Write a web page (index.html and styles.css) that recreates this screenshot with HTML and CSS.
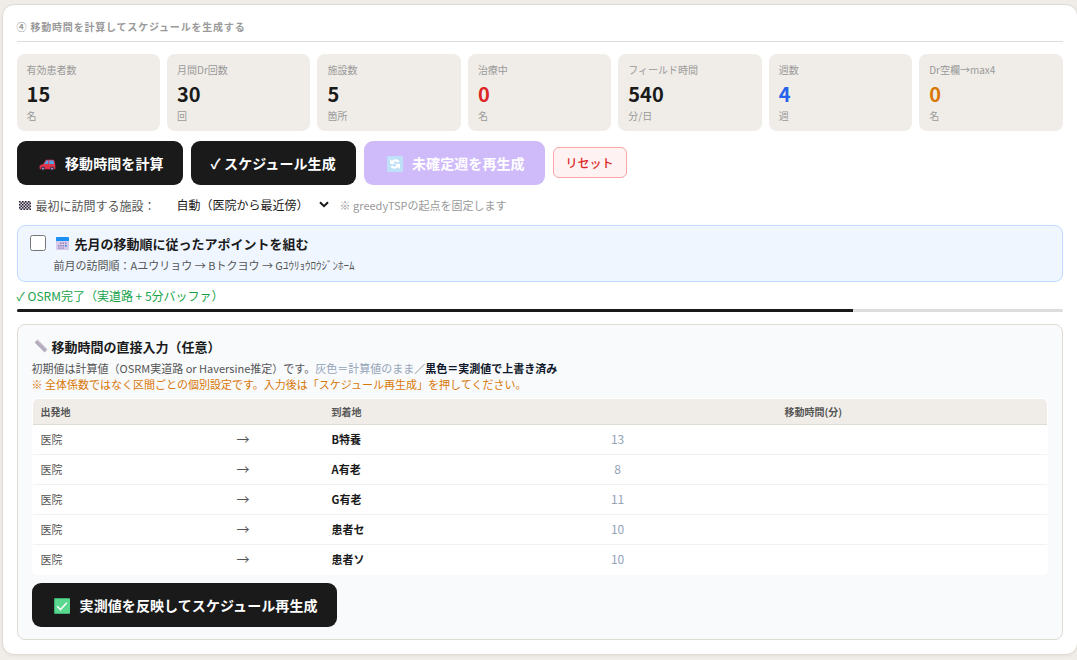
FILE: index.html
```html
<!DOCTYPE html>
<html lang="ja">
<head>
<meta charset="utf-8">
<title>スケジュール生成</title>
<link rel="stylesheet" href="styles.css">
</head>
<body>
<main class="card">
  <h2 class="card-title">④ 移動時間を計算してスケジュールを生成する</h2>

  <section class="stats">
    <div class="stat"><div class="stat-label">有効患者数</div><div class="stat-value">15</div><div class="stat-unit">名</div></div>
    <div class="stat"><div class="stat-label">月間Dr回数</div><div class="stat-value">30</div><div class="stat-unit">回</div></div>
    <div class="stat"><div class="stat-label">施設数</div><div class="stat-value">5</div><div class="stat-unit">箇所</div></div>
    <div class="stat"><div class="stat-label">治療中</div><div class="stat-value red">0</div><div class="stat-unit">名</div></div>
    <div class="stat"><div class="stat-label">フィールド時間</div><div class="stat-value">540</div><div class="stat-unit">分/日</div></div>
    <div class="stat"><div class="stat-label">週数</div><div class="stat-value blue">4</div><div class="stat-unit">週</div></div>
    <div class="stat"><div class="stat-label">Dr空欄→max4</div><div class="stat-value amber">0</div><div class="stat-unit">名</div></div>
  </section>

  <div class="actions">
    <button class="btn btn-calc">
      <svg class="icon-car" viewBox="0 0 17 12" width="17" height="12">
        <path d="M1 6.200 4.200 5 6.400 1.400Q6.800.8 7.600.8H14q1.200 0 1.500 1.200L16.300 6v3.400q0 .8-.8.8H1.600Q.6 10.200.6 9.200V7z" fill="#e0344c"/>
        <path d="M5.200 5 7 2q.2-.4.7-.4H9.300V5zM10.300 1.600H13.600q.7 0 .9.700L15 5H10.300z" fill="#4aa5e8"/>
        <circle cx="4" cy="9.600" r="2" fill="#3d3550"/><circle cx="4" cy="9.600" r=".9" fill="#b9a9d0"/>
        <circle cx="13" cy="9.600" r="2" fill="#3d3550"/><circle cx="13" cy="9.600" r=".9" fill="#b9a9d0"/>
      </svg>
      <span>移動時間を計算</span>
    </button>
    <button class="btn btn-gen">✓ スケジュール生成</button>
    <button class="btn btn-regen">
      <svg class="icon-cycle" viewBox="0 0 16 16" width="16" height="16">
        <rect width="16" height="16" rx="1" fill="#bfe0f9"/>
        <path d="M3 3v5h5L6.300 6.300Q8.500 4.500 10.500 6.500L12.800 5.600Q9.500 1.500 4.700 4.700zM13 13V8H8l1.700 1.700Q7.500 11.500 5.500 9.500L3.200 10.400Q6.500 14.500 11.300 11.300z" fill="#fff"/>
      </svg>
      <span>未確定週を再生成</span>
    </button>
    <button class="btn-reset">リセット</button>
  </div>

  <div class="start-row">
    <svg class="icon-flag" viewBox="0 0 12 9" width="12" height="9">
      <rect width="12" height="9" fill="#d9d4de"/>
      <path d="M0 0h1.500v1.500H0zM3 0h1.500v1.500H3zM6 0h1.500v1.500H6zM9 0h1.500v1.500H9zM1.500 1.500H3V3H1.500zM4.500 1.500H6V3H4.500zM7.500 1.500H9V3H7.500zM10.500 1.500H12V3h-1.500zM0 3h1.500v1.500H0zM3 3h1.500v1.500H3zM6 3h1.500v1.500H6zM9 3h1.500v1.500H9zM1.500 4.500H3V6H1.500zM4.500 4.500H6V6H4.500zM7.500 4.500H9V6H7.500zM10.500 4.500H12V6h-1.500zM0 6h1.500v1.500H0zM3 6h1.500v1.500H3zM6 6h1.500v1.500H6zM9 6h1.500v1.500H9zM1.500 7.500H3V9H1.500zM4.500 7.500H6V9H4.500zM7.500 7.500H9V9H7.500zM10.500 7.500H12V9h-1.500z" fill="#2c2335"/>
    </svg>
    <span class="start-label">最初に訪問する施設：</span>
    <span class="select">自動（医院から最近傍）
      <svg viewBox="0 0 10 7" width="10" height="7"><path d="m1 1.200 4 4 4-4" fill="none" stroke="#1a1a1a" stroke-width="2"/></svg>
    </span>
    <span class="start-note">※ greedyTSPの起点を固定します</span>
  </div>

  <label class="option">
    <input class="option-check" type="checkbox">
    <span class="option-body">
      <span class="option-title">
        <svg viewBox="0 0 13 13" width="13" height="13">
          <rect width="13" height="13" rx="1" fill="#d6caea"/>
          <path d="M0 4V1q0-1 1-1h11q1 0 1 1v3z" fill="#1b8ff2"/>
          <path d="M4 5.500h1.500V7H4zM6.500 5.500H8V7H6.500zM9 5.500h1.500V7H9zM2 8h1.500v1.400H2zM4.300 8h1.500v1.400H4.300zM6.600 8h1.500v1.400H6.600zM2 10.400h1.500v1.400H2zM4.300 10.400h1.500v1.400H4.300zM6.600 10.400h1.500v1.400H6.600z" fill="#9482b8"/>
          <path d="M9 8h1.700v1.500H9z" fill="#2a7fe0"/>
        </svg>
        <span>先月の移動順に従ったアポイントを組む</span>
      </span>
      <span class="option-sub">前月の訪問順：Aユウリョウ → Bトクヨウ → Gﾕｳﾘｮｳﾛｳｼﾞﾝﾎｰﾑ</span>
    </span>
  </label>

  <div class="status">✓ OSRM完了（実道路 + 5分バッファ）</div>
  <div class="progress"><div class="progress-fill" style="width:80%"></div></div>

  <section class="panel">
    <h3 class="panel-title">
      <svg viewBox="0 0 14 14" width="14" height="14">
        <path d="M3.600.6 13.400 10.400 10.600 13.400.6 3.600z" fill="#b4acbc"/>
        <path d="M3.600.6 13.400 10.400 12.800 11 3 1.200z" fill="#d2cbd8"/>
      </svg>
      <span>移動時間の直接入力（任意）</span>
    </h3>
    <p class="hint">初期値は計算値（OSRM実道路 or Haversine推定）です。<span class="hint-muted">灰色＝計算値のまま</span>／<b class="hint-strong">黒色＝実測値で上書き済み</b></p>
    <p class="hint hint-warn">※ 全体係数ではなく区間ごとの個別設定です。入力後は「スケジュール再生成」を押してください。</p>
    <div class="table">
      <div class="row row-head"><span>出発地</span><span class="head-dest">到着地</span><span class="head-time">移動時間(分)</span></div>
      <div class="row"><span>医院</span><span class="arrow">→</span><b>B特養</b><span class="minutes">13</span></div>
      <div class="row"><span>医院</span><span class="arrow">→</span><b>A有老</b><span class="minutes">8</span></div>
      <div class="row"><span>医院</span><span class="arrow">→</span><b>G有老</b><span class="minutes">11</span></div>
      <div class="row"><span>医院</span><span class="arrow">→</span><b>患者セ</b><span class="minutes">10</span></div>
      <div class="row"><span>医院</span><span class="arrow">→</span><b>患者ソ</b><span class="minutes">10</span></div>
    </div>
    <button class="btn btn-apply">
      <svg class="icon-done" viewBox="0 0 16 16" width="16" height="16">
        <rect width="16" height="16" rx="1" fill="#3fae75"/>
        <rect x="1" y="1" width="15" height="14" rx="1" fill="#5ad890"/>
        <path d="m3.200 8.300 3.300 3.400 6.300-6.900" fill="none" stroke="#fff" stroke-width="1.600"/>
      </svg>
      <span>実測値を反映してスケジュール再生成</span>
    </button>
  </section>
</main>
</body>
</html>
```
FILE: styles.css
```css
* { box-sizing: border-box; }

body {
  margin: 0;
  height: 660px;
  padding: 4px 0 0 1.6px;
  overflow: hidden;
  background: #f0ede8;
  color: #1a1a1a;
  font-family: "Noto Sans CJK JP", sans-serif;
  font-size: 12px;
}

svg { flex: none; display: block; }
button { font-family: inherit; margin: 0; }

.card {
  width: 1076px;
  height: 651px;
  padding: 12px 14px 0;
  background: #fff;
  border: 1px solid #dedad4;
  border-radius: 12px;
  box-shadow: 0 1px 3px rgba(0, 0, 0, .05);
}

.card-title {
  margin: 0 0 12px;
  height: 25px;
  border-bottom: 1px solid #dddddb;
  font-size: 10px;
  line-height: 20px;
  letter-spacing: .8px;
  color: #999;
}

.stats {
  display: grid;
  grid-template-columns: repeat(7, 1fr);
  gap: 7px;
  margin-bottom: 10px;
}

.stat {
  height: 77px;
  padding: 8px 10px;
  background: #f0ede8;
  border-radius: 8px;
  white-space: nowrap;
}

.stat-label, .stat-unit { font-size: 10px; line-height: 15px; color: #999; }
.stat-value { padding-top: 2px; font-size: 20px; font-weight: 700; line-height: 30px; height: 31px; }
.red { color: #dc2626; }
.blue { color: #2563eb; }
.amber { color: #d97706; }

.actions { display: flex; align-items: center; gap: 8px; }

.btn {
  display: flex;
  align-items: center;
  height: 44px;
  padding: 0 20px;
  border: 0;
  border-radius: 9px;
  background: #1a1a1a;
  color: #fff;
  font-size: 14px;
  font-weight: 700;
  line-height: 20px;
  letter-spacing: .08px;
  white-space: nowrap;
}

.btn-calc { width: 166px; padding-left: 22px; gap: 9.4px; }
.icon-car { margin-top: 4px; }
.icon-cycle, .icon-done { margin-top: 2px; }
.btn-gen { width: 165px; }
.btn-regen { width: 181px; padding-left: 23px; gap: 9.4px; background: #d0bbfa; }

.btn-reset {
  width: 74px;
  height: 31px;
  margin-bottom: 1px;
  padding: 0;
  border: 1px solid #fca5a5;
  border-radius: 6px;
  background: #fef2f2;
  color: #dc2626;
  font-size: 12px;
  font-weight: 500;
  line-height: 18px;
}

.start-row {
  display: flex;
  align-items: center;
  height: 40px;
  padding-left: 2px;
  white-space: nowrap;
}

.start-label { width: 141px; margin-left: 5px; color: #555; }
.select { display: flex; align-items: center; justify-content: space-between; width: 152px; margin-bottom: 2px; font-size: 12px; }
.start-note { margin-left: 11px; font-size: 11px; color: #999; }

.option {
  display: flex;
  height: 57px;
  padding: 8px 12px;
  background: #eff6ff;
  border: 1px solid #bfdbfe;
  border-radius: 8px;
}

.option-check { width: 16px; height: 16px; margin: 1px 8px 0 0; }
.option-body { display: flex; flex-direction: column; }
.option-title { display: flex; align-items: center; gap: 6px; height: 20px; padding-left: 2px; font-size: 13px; font-weight: 700; }
.option-sub { margin-top: 3px; font-size: 11px; line-height: 18px; color: #555; }

.status { height: 27px; font-size: 12px; line-height: 27px; color: #16a34a; }

.progress { height: 3px; background: #dddddb; border-radius: 2px; overflow: hidden; }
.progress-fill { height: 3px; background: #1a1a1a; }

.panel {
  height: 316px;
  margin-top: 12px;
  padding: 11px 14px 0;
  background: #f8fafc;
  border: 1px solid #dedad4;
  border-radius: 8px;
}

.panel-title { display: flex; align-items: center; gap: 4px; height: 20px; margin: 0 0 4px; padding-left: 2px; font-size: 13px; font-weight: 700; }
.hint { margin: 0; font-size: 11px; line-height: 16px; color: #555; white-space: nowrap; }
.hint-muted { color: #94a3b8; }
.hint-strong { color: #0f172a; }
.hint-warn { color: #d97706; }

.table {
  height: 177px;
  margin: 6px 0 8px;
  padding: 1px;
  background: #fff;
  border-radius: 6px;
}

.row {
  display: grid;
  grid-template-columns: 196px 95px 268px 1fr;
  align-items: center;
  height: 30px;
  padding: 0 0 2px 8px;
  border-bottom: 1px solid #f2f1ef;
  font-size: 11px;
  line-height: 16px;
  color: #555;
}

.row:last-child { border-bottom: 0; padding-bottom: 3px; }
.row b { color: #1a1a1a; }
.row-head {
  height: 26px;
  padding-bottom: 0;
  background: #f0ede8;
  border-bottom-color: #dedad4;
  border-radius: 5px 5px 0 0;
  font-size: 10px;
  font-weight: 700;
}
.head-dest { grid-column: 3; }
.head-time { padding-left: 185px; }
.arrow { font-size: 13px; }
.minutes { width: 36px; text-align: center; font-size: 12px; color: #94a3b8; }

.btn-apply { width: 305px; padding-left: 22px; gap: 10px; }
```
